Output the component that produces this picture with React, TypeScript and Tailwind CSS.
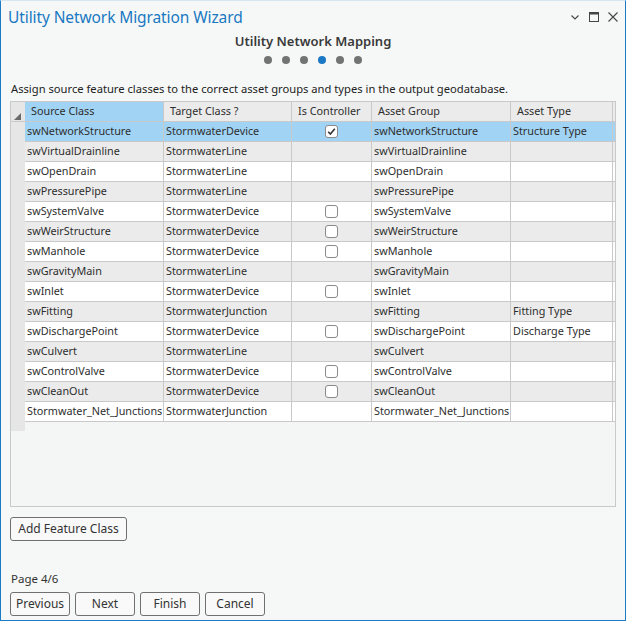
import React from "react";

type Row = { src: string; target: string; ctrl: null | boolean; group: string; type: string };

const rows: Row[] = [
  { src: "swNetworkStructure", target: "StormwaterDevice", ctrl: true, group: "swNetworkStructure", type: "Structure Type" },
  { src: "swVirtualDrainline", target: "StormwaterLine", ctrl: null, group: "swVirtualDrainline", type: "" },
  { src: "swOpenDrain", target: "StormwaterLine", ctrl: null, group: "swOpenDrain", type: "" },
  { src: "swPressurePipe", target: "StormwaterLine", ctrl: null, group: "swPressurePipe", type: "" },
  { src: "swSystemValve", target: "StormwaterDevice", ctrl: false, group: "swSystemValve", type: "" },
  { src: "swWeirStructure", target: "StormwaterDevice", ctrl: false, group: "swWeirStructure", type: "" },
  { src: "swManhole", target: "StormwaterDevice", ctrl: false, group: "swManhole", type: "" },
  { src: "swGravityMain", target: "StormwaterLine", ctrl: null, group: "swGravityMain", type: "" },
  { src: "swInlet", target: "StormwaterDevice", ctrl: false, group: "swInlet", type: "" },
  { src: "swFitting", target: "StormwaterJunction", ctrl: null, group: "swFitting", type: "Fitting Type" },
  { src: "swDischargePoint", target: "StormwaterDevice", ctrl: false, group: "swDischargePoint", type: "Discharge Type" },
  { src: "swCulvert", target: "StormwaterLine", ctrl: null, group: "swCulvert", type: "" },
  { src: "swControlValve", target: "StormwaterDevice", ctrl: false, group: "swControlValve", type: "" },
  { src: "swCleanOut", target: "StormwaterDevice", ctrl: false, group: "swCleanOut", type: "" },
  { src: "Stormwater_Net_Junctions", target: "StormwaterJunction", ctrl: null, group: "Stormwater_Net_Junctions", type: "" },
];

const cols = "grid grid-cols-[14px_139px_128px_80px_139px_102px_1fr]";

function Checkbox({ checked }: { checked: boolean }) {
  return (
    <div className="w-[13px] h-[13px] rounded-[3px] border border-[#8a8a8a] bg-white flex items-center justify-center">
      {checked && (
        <svg width="9" height="9" viewBox="0 0 9 9">
          <path d="M1.2 4.8 L3.4 7 L7.8 1.8" fill="none" stroke="#333" strokeWidth="1.6" />
        </svg>
      )}
    </div>
  );
}

function Btn({ children, w }: { children: React.ReactNode; w: string }) {
  return (
    <button
      className={`${w} h-[24px] rounded-[3px] border border-[#707070] bg-[#f9f9f9] text-[12px] text-[#333] flex items-center justify-center`}
    >
      {children}
    </button>
  );
}

export default function App() {
  return (
    <div
      className="w-[626px] h-[621px] bg-[#f6f8f8] border-x border-b border-[#1d7bc6] border-t border-t-[#d7e6f2] flex flex-col overflow-hidden"
      style={{ fontFamily: '"Noto Sans", "Open Sans", sans-serif' }}
    >
      {/* title bar */}
      <div className="h-[32px] flex items-center pl-[7px] pr-[6px] shrink-0">
        <div className="text-[15.5px] text-[#1a78c2] leading-none tracking-[-0.1px] mt-[2px]">Utility Network Migration Wizard</div>
        <div className="ml-auto flex items-center gap-[7px] text-[#333]">
          <svg width="12" height="12" viewBox="0 0 12 12">
            <path d="M2.5 4.5 L6 8 L9.5 4.5" fill="none" stroke="#444" strokeWidth="1.1" />
          </svg>
          <svg width="12" height="12" viewBox="0 0 12 12">
            <rect x="1.5" y="1.5" width="9" height="9" fill="none" stroke="#444" strokeWidth="1" />
            <rect x="1.5" y="1.5" width="9" height="2" fill="#444" />
          </svg>
          <svg width="12" height="12" viewBox="0 0 12 12">
            <path d="M1.5 1.5 L10.5 10.5 M10.5 1.5 L1.5 10.5" fill="none" stroke="#444" strokeWidth="1.1" />
          </svg>
        </div>
      </div>

      {/* step title */}
      <div className="h-[18px] mt-[-1px] text-center text-[13px] font-semibold text-[#3a3a3a] leading-[18px]">
        Utility Network Mapping
      </div>
      <div className="mt-[6px] flex justify-center gap-[10px] h-[8px]">
        {[0, 1, 2, 3, 4, 5].map((i) => (
          <div key={i} className={`w-[8px] h-[8px] rounded-full ${i === 3 ? "bg-[#1b78c4]" : "bg-[#737373]"}`} />
        ))}
      </div>

      <div className="mt-[17px] pl-[10px] text-[11.2px] leading-[16px] text-[#222]">
        Assign source feature classes to the correct asset groups and types in the output geodatabase.
      </div>

      {/* grid */}
      <div className="mt-[4px] mx-[9px] h-[406px] border border-[#c9c9c9] bg-[#f4f6f6] flex flex-col text-[10.8px] text-[#2e2e2e]">
        <div className={`${cols} h-[20px] shrink-0 bg-[#ebebeb] border-b border-[#c9c9c9]`}>
          <div className="bg-[#e6e6e6] relative">
            <svg className="absolute left-[3px] bottom-[1px]" width="7" height="7" viewBox="0 0 7 7">
              <polygon points="7,0 7,7 0,7" fill="#6a6a6a" />
            </svg>
          </div>
          <div className="bg-[#a1d3f4] border-r border-[#c9c9c9] pl-[6px] flex items-center">Source Class</div>
          <div className="border-r border-[#c9c9c9] pl-[6px] flex items-center">Target Class ?</div>
          <div className="border-r border-[#c9c9c9] pl-[6px] flex items-center">Is Controller</div>
          <div className="border-r border-[#c9c9c9] pl-[6px] flex items-center">Asset Group</div>
          <div className="border-r border-[#c9c9c9] pl-[6px] flex items-center">Asset Type</div>
          <div />
        </div>
        {rows.map((r, i) => {
          const bg = i === 0 ? "bg-[#a1d3f4]" : i % 2 === 1 ? "bg-[#ebebeb]" : "bg-white";
          return (
            <div key={i} className={`${cols} h-[20px] shrink-0`}>
              <div className="bg-[#e6e6e6]" />
              <div className={`${bg} border-r border-b border-[#c9c9c9] pl-[2px] flex items-center whitespace-nowrap overflow-hidden`}>{r.src}</div>
              <div className={`${bg} border-r border-b border-[#c9c9c9] pl-[2px] flex items-center whitespace-nowrap overflow-hidden`}>{r.target}</div>
              <div className={`${bg} border-r border-b border-[#c9c9c9] flex items-center justify-center`}>
                {r.ctrl !== null && <Checkbox checked={r.ctrl} />}
              </div>
              <div className={`${bg} border-r border-b border-[#c9c9c9] pl-[2px] flex items-center whitespace-nowrap overflow-hidden`}>{r.group}</div>
              <div className={`${bg} border-r border-b border-[#c9c9c9] pl-[2px] flex items-center whitespace-nowrap overflow-hidden`}>{r.type}</div>
              <div className={`${bg} border-b border-[#c9c9c9]`} />
            </div>
          );
        })}
        <div className="grid grid-cols-[14px_1fr] h-[9px] shrink-0">
          <div className="bg-[#e6e6e6]" />
          <div />
        </div>
      </div>

      <div className="mt-[10px] pl-[9px]">
        <Btn w="w-[117px]">Add Feature Class</Btn>
      </div>

      <div className="mt-[30px] pl-[10px] text-[11.5px] leading-[16px] text-[#333]">Page 4/6</div>

      <div className="mt-[5px] pl-[9px] flex gap-[5px]">
        <Btn w="w-[60px]">Previous</Btn>
        <Btn w="w-[60px]">Next</Btn>
        <Btn w="w-[60px]">Finish</Btn>
        <Btn w="w-[60px]">Cancel</Btn>
      </div>
    </div>
  );
}
